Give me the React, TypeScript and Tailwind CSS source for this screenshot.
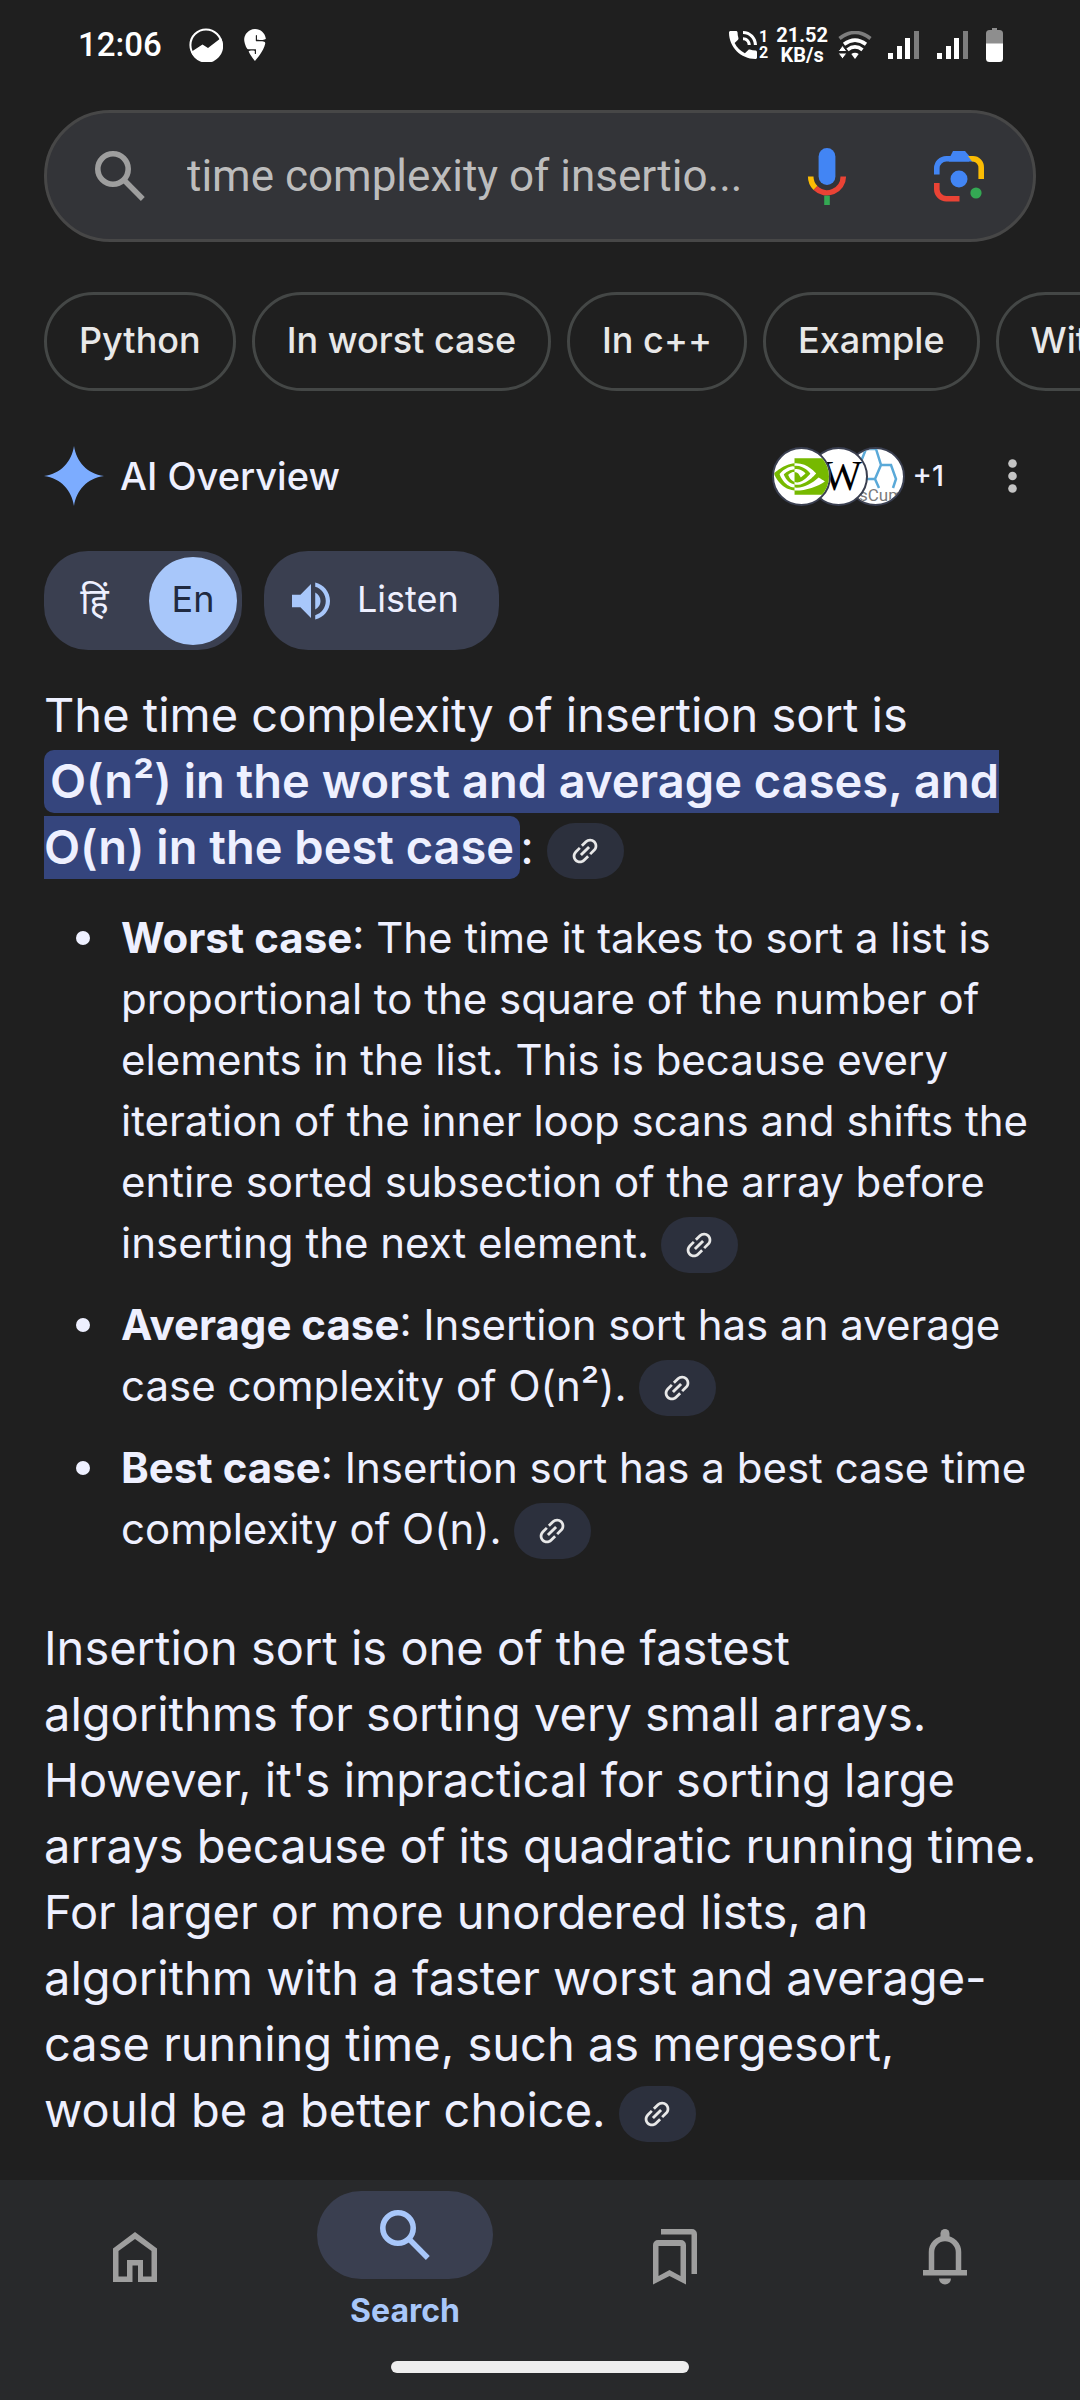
import { SiNvidia, SiSwiggy } from "react-icons/si";

const chips = ["Python", "In worst case", "In c++", "Example", "With example"];

function SearchGlyph() {
  return (
    <svg className="size-[50px] shrink-0" viewBox="0 0 50 50" fill="none" stroke="currentColor" aria-hidden="true">
      <circle cx="18" cy="18" r="15.2" strokeWidth="5.6" />
      <path d="M28.5 28.5 47.8 48" strokeWidth="5.4" />
    </svg>
  );
}

function Signal() {
  return (
    <svg className="h-7 w-8" viewBox="0 0 32 28" fill="white" aria-hidden="true">
      <rect x="0" y="22" width="5" height="6" />
      <rect x="9" y="15" width="5" height="13" />
      <rect x="17" y="7" width="5" height="21" />
      <rect x="26" y="0" width="5" height="28" fill="#7d7d7d" />
    </svg>
  );
}

function StatusBar() {
  return (
    <div className="flex h-[90px] items-center pr-[77px] pl-[78px] font-['Roboto',sans-serif] text-white">
      <span className="text-[33px] font-medium">12:06</span>
      <svg className="ml-[27px] size-[34px]" viewBox="0 0 34 34" aria-hidden="true">
        <circle cx="17" cy="17" r="15.6" fill="none" stroke="white" strokeWidth="2" />
        <path d="M2 24 13.5 16.5l5.5 3.5L32 10a16.6 16.6 0 1 1-30 14z" fill="white" />
      </svg>
      <SiSwiggy className="ml-4 size-8" aria-hidden="true" />
      <svg className="ml-auto size-7" viewBox="3 3 18 18" fill="white" aria-hidden="true">
        <path d="M20 15.5c-1.25 0-2.45-.2-3.57-.57-.35-.11-.74-.03-1.02.24l-2.2 2.2c-2.83-1.44-5.15-3.75-6.59-6.59l2.2-2.21c.28-.26.36-.65.25-1C8.7 6.45 8.5 5.25 8.5 4c0-.55-.45-1-1-1H4c-.55 0-1 .45-1 1 0 9.39 7.61 17 17 17 .55 0 1-.45 1-1v-3.5c0-.55-.45-1-1-1zM19 12h2c0-4.97-4.03-9-9-9v2c3.87 0 7 3.13 7 7zm-4 0h2c0-2.76-2.24-5-5-5v2c1.66 0 3 1.34 3 3z" />
      </svg>
      <div className="ml-[2px] flex flex-col text-[16px] leading-4 font-bold">
        <span>1</span>
        <span>2</span>
      </div>
      <div className="ml-2 flex flex-col items-center text-[20px] leading-5 font-bold">
        <span>21.52</span>
        <span>KB/s</span>
      </div>
      <svg className="ml-2.5 h-7 w-[34px]" viewBox="0 0 34 28" fill="none" aria-hidden="true">
        <path d="M1.5 7.5Q17-4.5 32.5 7.5" stroke="#7d7d7d" strokeWidth="3.6" />
        <path d="M6 13.2Q17 5 28 13.2M9.5 18.8Q17 13 24.5 18.8" stroke="white" strokeWidth="3.6" />
        <path d="M13.3 23Q17 20.5 20.7 23L17 28z" fill="white" />
        <path d="M4.5 14.5 9 20.5H0zM0 22h9l-4.5 6z" fill="white" stroke="#1f1f1f" strokeWidth="1" />
      </svg>
      <div className="ml-4 flex gap-[17px]">
        <Signal />
        <Signal />
      </div>
      <svg className="ml-[17px] h-[34px] w-[17px]" viewBox="0 0 17 34" aria-hidden="true">
        <path d="M0 16V5.5A3.5 3.5 0 0 1 3.5 2H6V0h5v2h2.5A3.5 3.5 0 0 1 17 5.5V16z" fill="#8e8e8e" />
        <path d="M0 15.5h17v15a3.5 3.5 0 0 1-3.5 3.5h-10A3.5 3.5 0 0 1 0 30.5z" fill="white" />
      </svg>
    </div>
  );
}

function SearchBar() {
  return (
    <form className="mx-11 mt-5 flex h-[132px] items-center rounded-full border-3 border-[#474747] bg-[#333438] pr-12 pl-12">
      <span className="text-[#9e9e9e]">
        <SearchGlyph />
      </span>
      <input
        type="text"
        aria-label="Search"
        defaultValue="time complexity of insertio..."
        className="ml-[42px] min-w-0 flex-1 bg-transparent font-['Roboto',sans-serif] text-[44px] text-[#bdbdbd] outline-none"
      />
      <button type="button" aria-label="Voice search">
        <svg className="h-[58px] w-10" viewBox="0 0 40 58" fill="none">
          <rect x="11.6" y="1" width="16.8" height="37" rx="8.4" fill="#4285f4" />
          <path d="M3.7 29.5A16.3 16.3 0 0 0 8.5 41" stroke="#fbbc04" strokeWidth="5.6" />
          <path d="M8.5 41A16.3 16.3 0 0 0 36.3 29.5" stroke="#ea4335" strokeWidth="5.6" />
          <path d="M20 48.6V58" stroke="#34a853" strokeWidth="5.6" />
        </svg>
      </button>
      <button type="button" aria-label="Search with camera" className="ml-[86px]">
        <svg className="size-[52px]" viewBox="0 0 52 52" fill="none">
          <path d="M3.8 24.5V18A9.5 9.5 0 0 1 13.3 8.7H36" stroke="#4285f4" strokeWidth="5.6" />
          <path d="M15.5 10 20 1h12l9 10.5H16z" fill="#4285f4" />
          <path d="M35 6h5a11 11 0 0 1 11 11.5V29h-5.600V18a6 6 0 0 0-5.400-6.500h-1z" fill="#fbbc04" />
          <path d="M3.8 33v6.500A9.500 9.500 0 0 0 13.300 48.700H26.500" stroke="#ea4335" strokeWidth="5.6" />
          <circle cx="26" cy="29" r="8.5" fill="#4285f4" />
          <circle cx="43" cy="43" r="5.6" fill="#34a853" />
        </svg>
      </button>
    </form>
  );
}

function SourceLink() {
  return (
    <button
      type="button"
      aria-label="View source"
      className="inline-flex h-14 w-[77px] items-center justify-center rounded-full bg-[#2c303d] text-[#e8e8e8]"
    >
      <svg className="size-[26px]" viewBox="3 3 18 18" fill="currentColor">
        <g transform="rotate(-45 12 12)">
          <path d="M3.9 12c0-1.71 1.39-3.1 3.1-3.1h4V7H7c-2.76 0-5 2.24-5 5s2.24 5 5 5h4v-1.9H7c-1.71 0-3.1-1.39-3.1-3.1zM8 13h8v-2H8v2zm9-6h-4v1.9h4c1.71 0 3.1 1.39 3.1 3.1s-1.39 3.1-3.1 3.1h-4V17h4c2.76 0 5-2.24 5-5s-2.24-5-5-5z" />
        </g>
      </svg>
    </button>
  );
}

function Sources() {
  return (
    <button type="button" aria-label="Sources" className="mr-11 ml-auto flex items-center">
      <span className="z-20 flex size-[59px] items-center justify-center overflow-hidden rounded-full border-2 border-[#3a3f50] bg-white">
        <SiNvidia className="size-[55px] shrink-0 text-[#76b900]" />
      </span>
      <span className="z-10 -ml-[22px] flex size-[59px] items-center justify-center overflow-hidden rounded-full border-2 border-[#3a3f50] bg-white pl-2 font-['Liberation_Serif',serif] text-[42px] text-black">
        W
      </span>
      <span className="-ml-[22px] flex size-[59px] overflow-hidden rounded-full border-2 border-[#3a3f50] bg-white">
        <svg className="size-[55px]" viewBox="0 0 55 55" fill="none">
          <path
            d="M18 0 12 15l5 15h10l6-14L28 0H17M33 16h10l5 14-3 9M27 30l4 9M17 30l-4 8"
            stroke="#5aa9d8"
            strokeWidth="2.5"
          />
          <text x="11" y="52" fontSize="17" fill="#7a7a7a" fontFamily="Roboto, sans-serif">
            sCum
          </text>
        </svg>
      </span>
      <span className="ml-2 text-[29px] font-medium">+1</span>
    </button>
  );
}

function CaseItem({ title, children }: { title: string; children: React.ReactNode }) {
  return (
    <li className="grid grid-cols-[77px_1fr]">
      <span className="mt-6 size-3.5 justify-self-center rounded-full bg-[#eef0ff]" />
      <p>
        <strong className="font-bold">{title}</strong>: {children} <SourceLink />
      </p>
    </li>
  );
}

function NavBar() {
  return (
    <nav className="mt-auto bg-[#28292b] pb-[27px] text-[#9e9e9e]">
      <div className="grid h-[154px] grid-cols-4 items-center justify-items-center">
        <button type="button" aria-label="Home">
          <svg className="h-[50px] w-11" viewBox="0 0 44 50" fill="currentColor" fillRule="evenodd">
            <path d="M0 50V16.5L22 0l22 16.5V50H25V33.5h-5.500V50zM5.500 44.500H14V28h16v16.500h8.500V19L22 7 5.500 19z" />
          </svg>
        </button>
        <button type="button" className="flex flex-col items-center gap-3 pt-2 text-[#a8c7fa]">
          <span className="flex h-[88px] w-44 items-center justify-center rounded-full bg-[#3a3f50]">
            <SearchGlyph />
          </span>
          <span className="text-[32px] leading-10 font-bold">Search</span>
        </button>
        <button type="button" aria-label="Saved">
          <svg className="h-14 w-11" viewBox="0 0 44 56" fill="currentColor" fillRule="evenodd">
            <path d="M8 0h31a5 5 0 0 1 5 5v40h-5.500V5.500H8z" />
            <path d="M0 55.500V16a5 5 0 0 1 5-5h23a5 5 0 0 1 5 5v39.500L16.500 47zM5.500 47l11-6 11 6V17h-22z" />
          </svg>
        </button>
        <button type="button" aria-label="Notifications">
          <svg className="h-14 w-11" viewBox="0 0 44 56" fill="currentColor">
            <path d="M8.500 43V23a13.500 13.500 0 0 1 27 0V43" fill="none" stroke="currentColor" strokeWidth="5.5" />
            <rect x="17.5" y="0" width="9" height="12" rx="4.5" />
            <rect x="0" y="41" width="44" height="5.5" />
            <path d="M16 49.500h12a6 6 0 0 1-12 0z" />
          </svg>
        </button>
      </div>
      <div className="mx-auto mt-[27px] h-3 w-[298px] rounded-full bg-[#eeeeee]" />
    </nav>
  );
}

export default function App() {
  return (
    <div className="flex min-h-screen flex-col overflow-x-hidden bg-[#1f1f1f] font-['Inter','Noto_Sans',sans-serif] text-[#eef0ff]">
      <StatusBar />
      <SearchBar />
      <div className="mt-[50px] flex gap-4 overflow-hidden pl-11">
        {chips.map((c) => (
          <button
            key={c}
            type="button"
            className="h-[99px] shrink-0 rounded-full border-3 border-[#444746] px-8 pb-1 text-[36px] font-medium whitespace-nowrap text-[#e8e8e8]"
          >
            {c}
          </button>
        ))}
      </div>

      <main className="pr-10 pl-11">
        <div className="mt-[53px] flex h-16 items-center">
          <svg className="size-[60px]" viewBox="0 0 60 60" fill="#7cacff" aria-hidden="true">
            <path d="M30 0C32.500 16 43 27.500 60 30 43 32.500 32.500 44 30 60 27.500 44 17 32.500 0 30 17 27.500 27.500 16 30 0z" />
          </svg>
          <h1 className="ml-4 text-[38px] font-medium">AI Overview</h1>
          <Sources />
          <button type="button" aria-label="More options" className="mr-1 flex h-16 w-12 items-center justify-center">
            <svg className="h-9 w-[9px]" viewBox="0 0 9 36" fill="#c4c4c4">
              <circle cx="4.5" cy="5.5" r="4.3" />
              <circle cx="4.5" cy="18" r="4.3" />
              <circle cx="4.5" cy="30.5" r="4.3" />
            </svg>
          </button>
        </div>

        <div className="mt-[43px] flex h-[99px] gap-[22px] text-[36px]">
          <div className="flex items-center rounded-[44px] bg-[#3a3f50] pr-[5px]">
            <button type="button" lang="hi" className="w-[105px] pr-1 text-center">
              हिं
            </button>
            <button type="button" className="size-[88px] rounded-full bg-[#a8c7fa] pb-1 text-[#202a40]">
              En
            </button>
          </div>
          <button type="button" className="flex items-center rounded-[44px] bg-[#3a3f50] pr-10 pl-7">
            <svg className="size-[38px] text-[#a8c7fa]" viewBox="3 3 18 18" fill="currentColor" aria-hidden="true">
              <path d="M3 9v6h4l5 5V4L7 9H3zm13.5 3c0-1.77-1.02-3.29-2.5-4.03v8.05c1.48-.73 2.5-2.25 2.5-4.02zM14 3.23v2.06c2.89.86 5 3.54 5 6.71s-2.11 5.85-5 6.71v2.06c4.01-.91 7-4.49 7-8.77s-2.99-7.86-7-8.77z" />
            </svg>
            <span className="ml-[27px] pb-1">Listen</span>
          </button>
        </div>

        <p className="mt-8 text-[47px] leading-[66px]">
          The time complexity of insertion sort is{" "}
          <mark className="rounded-[10px] bg-[#35457d] px-1.5 pt-0.5 pb-1 font-semibold text-[#eef0ff]">
            O(n²) in the worst and average cases, and O(n) in the best case
          </mark>
          : <SourceLink />
        </p>

        <ul className="mt-[27px] flex flex-col gap-[21px] text-[42px] leading-[61px]">
          <CaseItem title="Worst case">
            The time it takes to sort a list is proportional to the square of the number of elements in the list. This
            is because every iteration of the inner loop scans and shifts the entire sorted subsection of the array
            before inserting the next element.
          </CaseItem>
          <CaseItem title="Average case">Insertion sort has an average case complexity of O(n²).</CaseItem>
          <CaseItem title="Best case">Insertion sort has a best case time complexity of O(n).</CaseItem>
        </ul>

        <p className="mt-14 text-[47px] leading-[66px]">
          Insertion sort is one of the fastest
          <br />
          algorithms for sorting very small arrays. However, it's impractical for sorting large arrays because of its
          quadratic running time. For larger or more unordered lists, an algorithm with a faster worst and average-case
          running time, such as mergesort, would be a better choice. <SourceLink />
        </p>
      </main>

      <NavBar />
    </div>
  );
}
